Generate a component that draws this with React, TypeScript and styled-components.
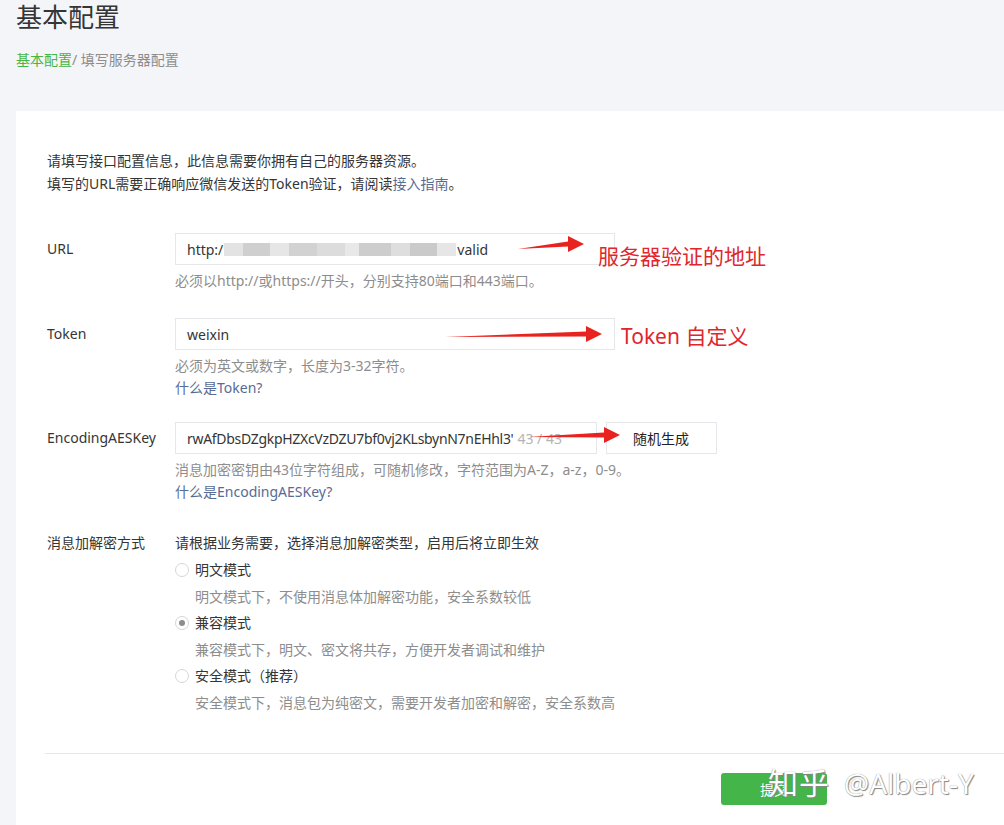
import React, { FC } from 'react';
import styled, { createGlobalStyle } from 'styled-components';

const GlobalStyle = createGlobalStyle`
  html, body {
    margin: 0;
    padding: 0;
    overflow: hidden;
    background: #f4f5f9;
  }

  body {
    color: #353535;
    font-family: "Noto Sans", "Noto Sans CJK SC", sans-serif;
    font-size: 14px;
  }
`;

const Page = styled.div`
  padding: 0 0 0 16px;
  position: relative;
  width: 1060px;
  height: 825px;
`;

const Title = styled.h2`
  font-size: 26px;
  font-weight: 400;
  line-height: 34px;
  margin: 0;
  color: #353535;
`;

const Breadcrumb = styled.div`
  color: #8d8d8d;
  font-size: 14px;
  line-height: 20px;
  margin-top: 16px;
`;

const Crumb = styled.span`
  color: #44b549;
`;

const Panel = styled.section`
  background: #fff;
  margin-top: 41px;
  padding: 38px 0 40px 31px;
  min-height: 640px;
`;

const Intro = styled.p`
  font-size: 14px;
  line-height: 23px;
  margin: 0 0 38px;
`;

const TextLink = styled.a`
  color: #576b95;
  text-decoration: none;
`;

const Row = styled.div<{ $gap?: number }>`
  display: flex;
  align-items: flex-start;
  margin-bottom: ${({ $gap }) => $gap ?? 24}px;
`;

const Label = styled.div<{ $tall?: boolean }>`
  flex: 0 0 128px;
  font-size: 14px;
  line-height: ${({ $tall }) => ($tall ? '22px' : '32px')};
`;

const Field = styled.div`
  display: flex;
  flex-direction: column;
`;

const InputLine = styled.div`
  display: flex;
  gap: 9px;
`;

const InputBox = styled.div<{ $width: number; $tight?: boolean }>`
  align-items: center;
  border: 1px solid #e7e7eb;
  box-sizing: border-box;
  display: flex;
  font-size: 14px;
  height: 32px;
  letter-spacing: ${({ $tight }) => ($tight ? '-0.3px' : 'normal')};
  padding: 0 11px;
  width: ${({ $width }) => $width}px;
  white-space: nowrap;
  overflow: hidden;
`;

const Blurred = styled.span`
  display: inline-block;
  height: 13px;
  width: 232px;
  margin: 0 1px;
  background: linear-gradient(
    90deg,
    #e3e3e3 0 8%,
    #cfcfcf 8% 20%,
    #e6e6e6 20% 28%,
    #d2d2d2 28% 40%,
    #dcdcdc 40% 52%,
    #e8e8e8 52% 58%,
    #cdcdcd 58% 72%,
    #dedede 72% 80%,
    #cacaca 80% 92%,
    #e6e6e6 92% 100%
  );
`;

const Counter = styled.span`
  color: #b4b4b4;
  letter-spacing: normal;
  margin-left: 4px;
`;

const Button = styled.button`
  background: #fff;
  border: 1px solid #e7e7eb;
  box-sizing: border-box;
  color: #222;
  font-family: inherit;
  font-size: 14px;
  height: 32px;
  padding: 0 0 0 26px;
  text-align: left;
  width: 111px;
`;

const Hint = styled.div`
  color: #8d8d8d;
  font-size: 14px;
  line-height: 22px;
  margin-top: 5px;
`;

const HelpLink = styled(TextLink)`
  font-size: 14px;
  line-height: 22px;
`;

const ModeIntro = styled.div`
  font-size: 14px;
  line-height: 22px;
  margin-bottom: 3px;
`;

const Radio = styled.label`
  align-items: center;
  display: flex;
  font-size: 14px;
  gap: 6px;
  line-height: 26px;
`;

const Dot = styled.span<{ $checked?: boolean }>`
  border: 1px solid #d6d6d6;
  border-radius: 50%;
  box-sizing: border-box;
  display: inline-block;
  height: 14px;
  position: relative;
  width: 14px;

  &::after {
    background: #8d8d8d;
    border-radius: 50%;
    content: '';
    display: ${({ $checked }) => ($checked ? 'block' : 'none')};
    height: 6px;
    left: 3px;
    position: absolute;
    top: 3px;
    width: 6px;
  }
`;

const ModeDesc = styled.div`
  color: #8d8d8d;
  font-size: 14px;
  line-height: 27px;
  padding-left: 20px;
`;

const Divider = styled.hr`
  border: 0;
  border-top: 1px solid #e7e7eb;
  margin: 37px 0 0 -2px;
`;

const Footer = styled.div`
  padding: 19px 0 0 674px;
`;

const Submit = styled.button`
  background: #44b549;
  border: 0;
  border-radius: 3px;
  color: #fff;
  font-family: inherit;
  font-size: 14px;
  height: 32px;
  width: 106px;
`;

const Note = styled.div<{ $x: number; $y: number }>`
  color: #e0262b;
  font-size: 21px;
  left: ${({ $x }) => $x}px;
  line-height: 28px;
  position: absolute;
  top: ${({ $y }) => $y}px;
  white-space: nowrap;
`;

const Arrows = styled.svg`
  height: 825px;
  left: 0;
  pointer-events: none;
  position: absolute;
  top: 0;
  width: 1004px;
`;

const Watermark = styled.div`
  color: #fff;
  font-size: 30px;
  left: 768px;
  letter-spacing: 1px;
  position: absolute;
  text-shadow: 0 0 1px #777, 1px 1px 1px #888;
  top: 759px;
  white-space: nowrap;
`;

const WatermarkId = styled.span`
  font-family: "Noto Sans", sans-serif;
  font-size: 28px;
  letter-spacing: 0;
  margin-left: 14px;
`;

const modes = [
  { name: '明文模式', desc: '明文模式下，不使用消息体加解密功能，安全系数较低', checked: false },
  { name: '兼容模式', desc: '兼容模式下，明文、密文将共存，方便开发者调试和维护', checked: true },
  { name: '安全模式（推荐）', desc: '安全模式下，消息包为纯密文，需要开发者加密和解密，安全系数高', checked: false },
];

const arrow = (x1: number, y1: number, x2: number, y2: number) => {
  const hx = x2 - 16;
  return `M${x1} ${y1} L${hx} ${y2 - 2.5} L${hx} ${y2 - 8} L${x2} ${y2} L${hx} ${y2 + 8} L${hx} ${y2 + 2.5} Z`;
};

const App: FC = () => (
  <Page>
    <GlobalStyle />
    <Title>基本配置</Title>
    <Breadcrumb>
      <Crumb>基本配置</Crumb>/ 填写服务器配置
    </Breadcrumb>

    <Panel>
      <Intro>
        请填写接口配置信息，此信息需要你拥有自己的服务器资源。
        <br />
        填写的URL需要正确响应微信发送的Token验证，请阅读<TextLink href="#">接入指南</TextLink>。
      </Intro>

      <Row $gap={26}>
        <Label>URL</Label>
        <Field>
          <InputBox $width={440}>
            http:/<Blurred />valid
          </InputBox>
          <Hint>必须以http://或https://开头，分别支持80端口和443端口。</Hint>
        </Field>
      </Row>

      <Row $gap={23}>
        <Label>Token</Label>
        <Field>
          <InputBox $width={440}>weixin</InputBox>
          <Hint>必须为英文或数字，长度为3-32字符。</Hint>
          <HelpLink href="#">什么是Token?</HelpLink>
        </Field>
      </Row>

      <Row $gap={29}>
        <Label>EncodingAESKey</Label>
        <Field>
          <InputLine>
            <InputBox $width={422} $tight>
              rwAfDbsDZgkpHZXcVzDZU7bf0vj2KLsbynN7nEHhl3'<Counter>43 / 43</Counter>
            </InputBox>
            <Button>随机生成</Button>
          </InputLine>
          <Hint>消息加密密钥由43位字符组成，可随机修改，字符范围为A-Z，a-z，0-9。</Hint>
          <HelpLink href="#">什么是EncodingAESKey?</HelpLink>
        </Field>
      </Row>

      <Row $gap={0}>
        <Label $tall>消息加解密方式</Label>
        <Field>
          <ModeIntro>请根据业务需要，选择消息加解密类型，启用后将立即生效</ModeIntro>
          {modes.map((m) => (
            <div key={m.name}>
              <Radio>
                <Dot $checked={m.checked} />
                {m.name}
              </Radio>
              <ModeDesc>{m.desc}</ModeDesc>
            </div>
          ))}
        </Field>
      </Row>

      <Divider />
      <Footer>
        <Submit>提交</Submit>
      </Footer>
    </Panel>

    <Arrows viewBox="0 0 1004 825">
      <path d={arrow(518, 249, 584, 244)} fill="#e8231f" />
      <path d={arrow(445, 337, 602, 334)} fill="#e8231f" />
      <path d={arrow(528, 437, 620, 435)} fill="#e8231f" />
    </Arrows>
    <Note $x={598} $y={242}>服务器验证的地址</Note>
    <Note $x={621} $y={322}>Token 自定义</Note>

    <Watermark>
      知乎<WatermarkId>@Albert-Y</WatermarkId>
    </Watermark>
  </Page>
);

export default App;
